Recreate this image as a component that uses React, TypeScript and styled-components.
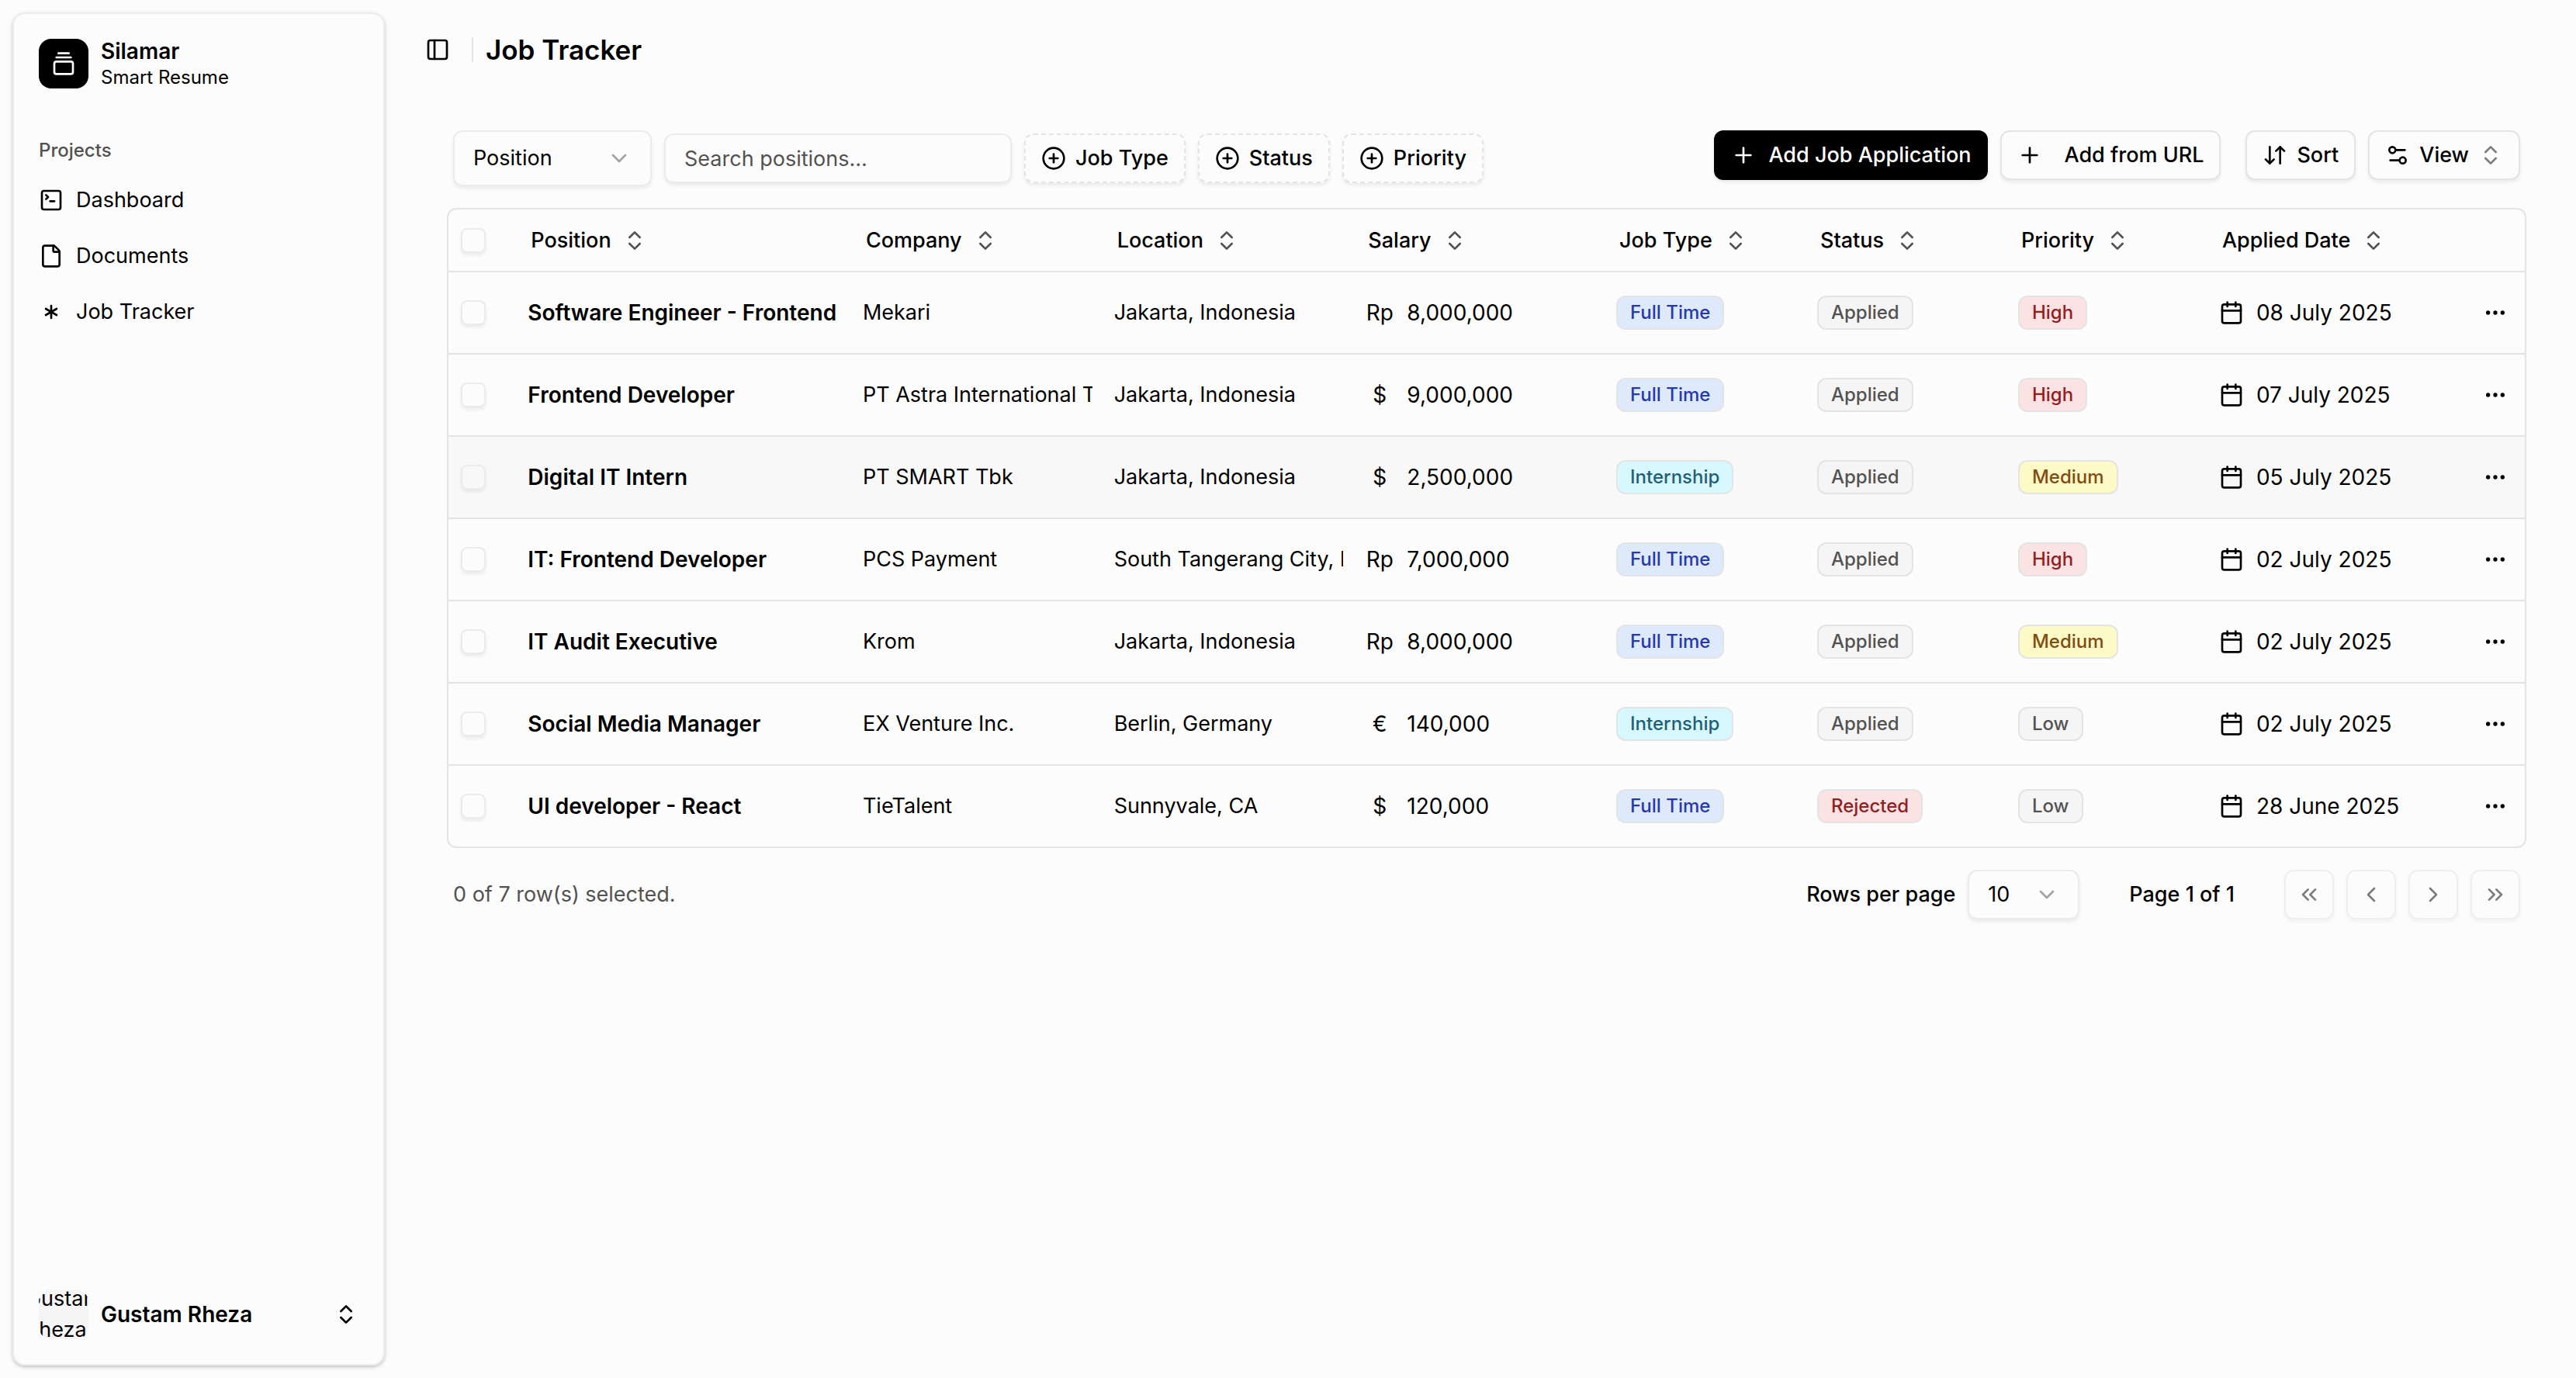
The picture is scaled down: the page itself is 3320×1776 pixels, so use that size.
import React from "react";
import styled, { createGlobalStyle } from "styled-components";
import {
  ArrowDownUp,
  Asterisk,
  Calendar,
  ChevronDown,
  ChevronLeft,
  ChevronRight,
  ChevronsLeft,
  ChevronsRight,
  ChevronsUpDown,
  CirclePlus,
  Ellipsis,
  File,
  GalleryVerticalEnd,
  PanelLeft,
  Plus,
  Settings2,
  SquareTerminal,
} from "lucide-react";

const ICON = 32;

const color = {
  page: "#fcfcfc",
  ink: "#000000",
  muted: "#525252",
  line: "#e4e4e4",
  soft: "#ebebeb",
  hover: "#f8f8f8",
  chip: "#f5f5f5",
};

const shadow = "0 3px 4px rgba(0, 0, 0, 0.07)";

const GlobalStyle = createGlobalStyle`
  *, *::before, *::after { box-sizing: border-box; }
  body {
    margin: 0;
    background: ${color.page};
    color: ${color.ink};
    font-family: Inter, "Liberation Sans", sans-serif;
    font-size: 27px;
    line-height: 40px;
  }
  button, input, select { font: inherit; color: inherit; margin: 0; }
  button { cursor: pointer; }
  svg { flex: none; display: block; }
`;

const Shell = styled.div`
  display: flex;
  min-height: 100vh;
`;

const SidebarSlot = styled.aside`
  flex: none;
  display: flex;
  width: 512px;
  padding: 16px;
`;

const SidebarCard = styled.div`
  flex: 1;
  min-width: 0;
  display: flex;
  flex-direction: column;
  border: 2px solid ${color.soft};
  border-radius: 16px;
  box-shadow: 0 2px 6px rgba(0, 0, 0, 0.12), 0 2px 3px rgba(0, 0, 0, 0.12);
`;

const SidebarSection = styled.div<{ $grow?: boolean }>`
  padding: 16px;
  flex: ${(p) => (p.$grow ? 1 : "none")};
`;

const SidebarButton = styled.button`
  display: flex;
  align-items: center;
  gap: 16px;
  width: 100%;
  height: 96px;
  padding: 16px;
  border: 0;
  border-radius: 12px;
  background: none;
  text-align: left;
`;

const LogoTile = styled.span`
  display: grid;
  place-items: center;
  width: 64px;
  height: 64px;
  border-radius: 16px;
  background: ${color.ink};
  color: #fff;
`;

const SidebarText = styled.span`
  flex: 1;
  display: grid;
`;

const SidebarName = styled.span`
  font-size: 28px;
  font-weight: 600;
  line-height: 35px;
`;

const SidebarTagline = styled.span`
  font-size: 24px;
  line-height: 32px;
`;

const GroupLabel = styled.h2`
  display: flex;
  align-items: center;
  height: 64px;
  margin: 0;
  padding: 0 16px;
  font-size: 24px;
  font-weight: 500;
  color: ${color.muted};
`;

const NavList = styled.ul`
  display: grid;
  gap: 8px;
  margin: 0;
  padding: 0;
  list-style: none;
`;

const NavLink = styled.a`
  display: flex;
  align-items: center;
  gap: 16px;
  height: 64px;
  padding: 0 16px;
  color: inherit;
  text-decoration: none;
`;

const Avatar = styled.span`
  display: flex;
  align-items: center;
  justify-content: center;
  width: 64px;
  height: 64px;
  border-radius: 16px;
  overflow: hidden;
  background: ${color.chip};
`;

const AvatarText = styled.span`
  flex: none;
  width: min-content;
`;

const Main = styled.main`
  flex: 1;
  min-width: 0;
`;

const TopBar = styled.header`
  display: flex;
  align-items: center;
  height: 128px;
  padding: 0 24px;
`;

const TriggerButton = styled.button`
  display: grid;
  place-items: center;
  width: 56px;
  height: 56px;
  padding: 0;
  border: 0;
  background: none;
`;

const Divider = styled.span`
  width: 2px;
  height: 32px;
  margin: 0 16px;
  background: ${color.line};
`;

const PageTitle = styled.h1`
  margin: 0;
  font-size: 35px;
  font-weight: 600;
`;

const Content = styled.section`
  display: grid;
  gap: 20px;
  padding: 32px 64px;
`;

const Toolbar = styled.div`
  display: flex;
  justify-content: space-between;
  align-items: flex-start;
  gap: 16px;
  padding: 8px;
`;

const ToolGroup = styled.div<{ $gap?: number }>`
  display: flex;
  align-items: center;
  gap: ${(p) => p.$gap ?? 16}px;
`;

const SelectFrame = styled.span<{ $width: number; $height: number }>`
  display: grid;
  grid-template: 100% / 100%;
  align-items: center;
  justify-items: end;
  width: ${(p) => p.$width}px;
  height: ${(p) => p.$height}px;
  & > * { grid-area: 1 / 1; }
  & > svg { margin-right: 26px; opacity: 0.35; pointer-events: none; }
`;

const SelectBox = styled.select`
  appearance: none;
  width: 100%;
  height: 100%;
  padding: 0 24px;
  border: 2px solid ${color.soft};
  border-radius: 12px;
  background: transparent;
  box-shadow: ${shadow};
`;

const SearchBox = styled.input`
  width: 448px;
  height: 64px;
  padding: 0 24px;
  border: 2px solid ${color.soft};
  border-radius: 12px;
  background: transparent;
  box-shadow: ${shadow};
  &::placeholder { color: ${color.muted}; opacity: 1; }
`;

const Button = styled.button<{ $dashed?: boolean; $gap?: number }>`
  display: flex;
  align-items: center;
  gap: ${(p) => p.$gap ?? 12}px;
  height: 64px;
  padding: 0 20px;
  border: 2px ${(p) => (p.$dashed ? "dashed" : "solid")} ${color.line};
  border-radius: 12px;
  background: ${color.page};
  font-weight: 500;
  white-space: nowrap;
  box-shadow: ${shadow};
`;

const PrimaryButton = styled(Button)`
  border-color: ${color.ink};
  background: ${color.ink};
  color: #fff;
`;

const FadedChevrons = styled(ChevronsUpDown)`
  opacity: 0.5;
`;

const TableFrame = styled.div`
  border: 2px solid ${color.line};
  border-radius: 12px;
  overflow: hidden;
`;

const Table = styled.table`
  width: 100%;
  table-layout: fixed;
  border-collapse: separate;
  border-spacing: 0;
`;

const HeadCell = styled.th`
  height: 81px;
  padding: 0 16px;
  border-bottom: 2px solid ${color.line};
  text-align: left;
`;

const SortButton = styled.button`
  display: flex;
  align-items: center;
  gap: 14px;
  height: 64px;
  padding: 0 4px;
  border: 0;
  background: none;
  font-weight: 500;
  white-space: nowrap;
  & > svg { color: ${color.muted}; }
`;

const Row = styled.tr<{ $hovered?: boolean }>`
  background: ${(p) => (p.$hovered ? color.hover : "transparent")};
  &:last-child > td { height: 104px; border-bottom: 0; }
`;

const Cell = styled.td`
  height: 106px;
  padding: 0 16px;
  border-bottom: 2px solid ${color.line};
`;

/* Long values are cut at the column edge, a little way into the padding. */
const Clip = styled.div<{ $strong?: boolean }>`
  margin-right: -4px;
  overflow: hidden;
  white-space: nowrap;
  ${(p) => p.$strong && "font-size: 28px; font-weight: 600;"}
`;

const CheckBox = styled.input`
  appearance: none;
  display: block;
  width: 32px;
  height: 32px;
  border: 2px solid ${color.soft};
  border-radius: 8px;
  box-shadow: ${shadow};
`;

const Inline = styled.div`
  display: flex;
  align-items: center;
  gap: 16px;
  font-size: 28px;
  white-space: nowrap;
`;

const Currency = styled.span`
  width: 38px;
  text-align: center;
`;

type Tone = "blue" | "cyan" | "gray" | "red" | "yellow";

const tones: Record<Tone, { bg: string; fg: string }> = {
  blue: { bg: "#dfe9fc", fg: "#2539ad" },
  cyan: { bg: "#d7f8fe", fg: "#245e75" },
  gray: { bg: "#f5f5f5", fg: "#525252" },
  red: { bg: "#fbe3e3", fg: "#90211f" },
  yellow: { bg: "#fefac8", fg: "#7f4d12" },
};

const Badge = styled.span<{ $tone: Tone }>`
  display: inline-flex;
  align-items: center;
  height: 44px;
  padding: 0 16px;
  border: 2px solid ${color.line};
  border-radius: 12px;
  background: ${(p) => tones[p.$tone].bg};
  color: ${(p) => tones[p.$tone].fg};
  font-size: 24px;
  font-weight: 500;
  vertical-align: middle;
  white-space: nowrap;
`;

const MoreCell = styled(Cell)`
  padding: 0 6px;
`;

const MoreButton = styled.button`
  display: grid;
  place-items: center;
  width: 64px;
  height: 64px;
  margin-left: auto;
  padding: 0;
  border: 0;
  background: none;
`;

const Footer = styled.div`
  display: flex;
  justify-content: space-between;
  align-items: center;
  padding: 8px;
`;

const Selected = styled.span`
  color: ${color.muted};
`;

const PageCount = styled.span`
  font-weight: 500;
`;

const RowsLabel = styled.label`
  font-weight: 500;
`;

const PageButton = styled.button`
  display: grid;
  place-items: center;
  width: 64px;
  height: 64px;
  padding: 0;
  border: 2px solid ${color.line};
  border-radius: 12px;
  background: ${color.page};
  color: ${color.ink};
  opacity: 0.5;
  box-shadow: ${shadow};
`;

interface Job {
  position: string;
  company: string;
  location: string;
  currency: string;
  salary: string;
  type: "Full Time" | "Internship";
  status: "Applied" | "Rejected";
  priority: "High" | "Medium" | "Low";
  date: string;
}

const job = (
  position: string,
  company: string,
  location: string,
  currency: string,
  salary: string,
  type: Job["type"],
  status: Job["status"],
  priority: Job["priority"],
  date: string,
): Job => ({ position, company, location, currency, salary, type, status, priority, date });

const jobs: Job[] = [
  job("Software Engineer - Frontend", "Mekari", "Jakarta, Indonesia", "Rp", "8,000,000", "Full Time", "Applied", "High", "08 July 2025"),
  job("Frontend Developer", "PT Astra International Tbk", "Jakarta, Indonesia", "$", "9,000,000", "Full Time", "Applied", "High", "07 July 2025"),
  job("Digital IT Intern", "PT SMART Tbk", "Jakarta, Indonesia", "$", "2,500,000", "Internship", "Applied", "Medium", "05 July 2025"),
  job("IT: Frontend Developer", "PCS Payment", "South Tangerang City, Indonesia", "Rp", "7,000,000", "Full Time", "Applied", "High", "02 July 2025"),
  job("IT Audit Executive", "Krom", "Jakarta, Indonesia", "Rp", "8,000,000", "Full Time", "Applied", "Medium", "02 July 2025"),
  job("Social Media Manager", "EX Venture Inc.", "Berlin, Germany", "€", "140,000", "Internship", "Applied", "Low", "02 July 2025"),
  job("UI developer - React", "TieTalent", "Sunnyvale, CA", "$", "120,000", "Full Time", "Rejected", "Low", "28 June 2025"),
];

const HOVERED_ROW = 2;

const columns = [
  { label: "Position", size: 200 },
  { label: "Company", size: 150 },
  { label: "Location", size: 150 },
  { label: "Salary", size: 150 },
  { label: "Job Type", size: 120 },
  { label: "Status", size: 120 },
  { label: "Priority", size: 120 },
  { label: "Applied Date", size: 150 },
];
const EDGE_SIZE = 40;
const totalSize = columns.reduce((sum, c) => sum + c.size, EDGE_SIZE * 2);
const share = (size: number) => ({ width: `${(size / totalSize) * 100}%` });

const toneOf: Record<string, Tone> = {
  "Full Time": "blue",
  Internship: "cyan",
  Applied: "gray",
  Rejected: "red",
  High: "red",
  Medium: "yellow",
  Low: "gray",
};

const navItems = [
  { label: "Dashboard", Icon: SquareTerminal },
  { label: "Documents", Icon: File },
  { label: "Job Tracker", Icon: Asterisk },
];

const pageButtons = [
  { label: "Go to first page", Icon: ChevronsLeft },
  { label: "Go to previous page", Icon: ChevronLeft },
  { label: "Go to next page", Icon: ChevronRight },
  { label: "Go to last page", Icon: ChevronsRight },
];

function Sidebar() {
  return (
    <SidebarSlot>
      <SidebarCard>
        <SidebarSection>
          <SidebarButton>
            <LogoTile>
              <GalleryVerticalEnd size={ICON} />
            </LogoTile>
            <SidebarText>
              <SidebarName>Silamar</SidebarName>
              <SidebarTagline>Smart Resume</SidebarTagline>
            </SidebarText>
          </SidebarButton>
        </SidebarSection>
        <SidebarSection as="nav" $grow>
          <GroupLabel>Projects</GroupLabel>
          <NavList>
            {navItems.map(({ label, Icon }) => (
              <li key={label}>
                <NavLink href="#">
                  <Icon size={ICON} />
                  {label}
                </NavLink>
              </li>
            ))}
          </NavList>
        </SidebarSection>
        <SidebarSection>
          <SidebarButton>
            <Avatar>
              <AvatarText>Gustam Rheza</AvatarText>
            </Avatar>
            <SidebarText>
              <SidebarName>Gustam Rheza</SidebarName>
            </SidebarText>
            <ChevronsUpDown size={ICON} />
          </SidebarButton>
        </SidebarSection>
      </SidebarCard>
    </SidebarSlot>
  );
}

function JobTable() {
  return (
    <TableFrame>
      <Table>
        <colgroup>
          <col style={share(EDGE_SIZE)} />
          {columns.map((c) => (
            <col key={c.label} style={share(c.size)} />
          ))}
          <col style={share(EDGE_SIZE)} />
        </colgroup>
        <thead>
          <tr>
            <HeadCell>
              <CheckBox type="checkbox" aria-label="Select all" />
            </HeadCell>
            {columns.map((c) => (
              <HeadCell key={c.label}>
                <SortButton>
                  {c.label}
                  <ChevronsUpDown size={ICON} />
                </SortButton>
              </HeadCell>
            ))}
            <HeadCell aria-label="Actions" />
          </tr>
        </thead>
        <tbody>
          {jobs.map((j, i) => (
            <Row key={j.position} $hovered={i === HOVERED_ROW}>
              <Cell>
                <CheckBox type="checkbox" aria-label={`Select ${j.position}`} />
              </Cell>
              <Cell>
                <Clip $strong>{j.position}</Clip>
              </Cell>
              <Cell>
                <Clip>{j.company}</Clip>
              </Cell>
              <Cell>
                <Clip>{j.location}</Clip>
              </Cell>
              <Cell>
                <Inline>
                  <Currency>{j.currency}</Currency>
                  <span>{j.salary}</span>
                </Inline>
              </Cell>
              {[j.type, j.status, j.priority].map((value) => (
                <Cell key={value}>
                  <Badge $tone={toneOf[value]}>{value}</Badge>
                </Cell>
              ))}
              <Cell>
                <Inline>
                  <Calendar size={ICON} />
                  {j.date}
                </Inline>
              </Cell>
              <MoreCell>
                <MoreButton aria-label="Open menu">
                  <Ellipsis size={ICON} />
                </MoreButton>
              </MoreCell>
            </Row>
          ))}
        </tbody>
      </Table>
    </TableFrame>
  );
}

export default function App() {
  return (
    <>
      <GlobalStyle />
      <Shell>
        <Sidebar />
        <Main>
          <TopBar>
            <TriggerButton aria-label="Toggle sidebar">
              <PanelLeft size={ICON} />
            </TriggerButton>
            <Divider />
            <PageTitle>Job Tracker</PageTitle>
          </TopBar>
          <Content>
            <Toolbar>
              <ToolGroup>
                <SelectFrame $width={256} $height={72}>
                  <SelectBox aria-label="Search field" defaultValue="Position">
                    <option>Position</option>
                    <option>Company</option>
                    <option>Location</option>
                  </SelectBox>
                  <ChevronDown size={ICON} />
                </SelectFrame>
                <SearchBox type="text" aria-label="Search positions" placeholder="Search positions..." />
                {["Job Type", "Status", "Priority"].map((label) => (
                  <Button key={label} $dashed>
                    <CirclePlus size={ICON} />
                    {label}
                  </Button>
                ))}
              </ToolGroup>
              <ToolGroup $gap={32}>
                <ToolGroup>
                  <PrimaryButton $gap={16}>
                    <Plus size={ICON} />
                    Add Job Application
                  </PrimaryButton>
                  <Button $gap={28}>
                    <Plus size={ICON} />
                    Add from URL
                  </Button>
                </ToolGroup>
                <ToolGroup>
                  <Button>
                    <ArrowDownUp size={ICON} />
                    Sort
                  </Button>
                  <Button>
                    <Settings2 size={ICON} />
                    View
                    <FadedChevrons size={ICON} />
                  </Button>
                </ToolGroup>
              </ToolGroup>
            </Toolbar>
            <JobTable />
            <Footer>
              <Selected>0 of 7 row(s) selected.</Selected>
              <ToolGroup $gap={64}>
                <ToolGroup>
                  <RowsLabel htmlFor="rows-per-page">Rows per page</RowsLabel>
                  <SelectFrame $width={144} $height={64}>
                    <SelectBox id="rows-per-page" defaultValue="10">
                      <option>10</option>
                      <option>20</option>
                      <option>50</option>
                    </SelectBox>
                    <ChevronDown size={ICON} />
                  </SelectFrame>
                </ToolGroup>
                <PageCount>Page 1 of 1</PageCount>
                <ToolGroup>
                  {pageButtons.map(({ label, Icon }) => (
                    <PageButton key={label} aria-label={label} disabled>
                      <Icon size={ICON} />
                    </PageButton>
                  ))}
                </ToolGroup>
              </ToolGroup>
            </Footer>
          </Content>
        </Main>
      </Shell>
    </>
  );
}
